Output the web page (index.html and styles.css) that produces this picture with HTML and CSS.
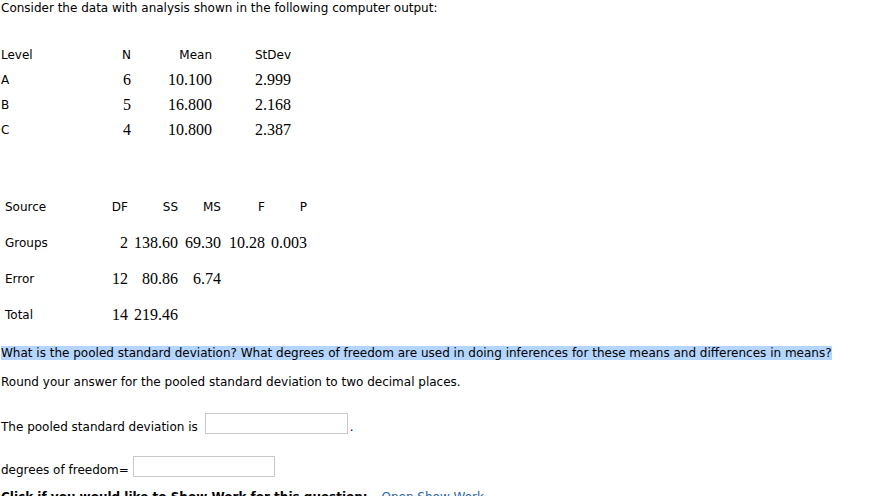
FILE: index.html
```html
<!DOCTYPE html>
<html>
<head>
<meta charset="utf-8">
<link rel="stylesheet" href="styles.css">
</head>
<body>
<div class="page">
  <p class="intro">Consider the data with analysis shown in the following computer output:</p>

  <div class="levels">
    <div class="lbl">Level</div><div class="hd">N</div><div class="hd">Mean</div><div class="hd">StDev</div>
    <div class="lbl">A</div><div class="num">6</div><div class="num">10.100</div><div class="num">2.999</div>
    <div class="lbl">B</div><div class="num">5</div><div class="num">16.800</div><div class="num">2.168</div>
    <div class="lbl">C</div><div class="num">4</div><div class="num">10.800</div><div class="num">2.387</div>
  </div>

  <div class="anova">
    <div class="src">Source</div><div class="hd">DF</div><div class="hd">SS</div><div class="hd">MS</div><div class="hd">F</div><div class="hd">P</div>
    <div class="src">Groups</div><div class="num">2</div><div class="num">138.60</div><div class="num">69.30</div><div class="num">10.28</div><div class="num">0.003</div>
    <div class="src">Error</div><div class="num">12</div><div class="num">80.86</div><div class="num">6.74</div><div class="num"></div><div class="num"></div>
    <div class="src">Total</div><div class="num">14</div><div class="num">219.46</div><div class="num"></div><div class="num"></div><div class="num"></div>
  </div>

  <p class="question"><span class="hl">What is the pooled standard deviation? What degrees of freedom are used in doing inferences for these means and differences in means?</span></p>
  <p class="round">Round your answer for the pooled standard deviation to two decimal places.</p>

  <p class="answer one">The pooled standard deviation is <span class="box wide"></span>.</p>
  <p class="answer two">degrees of freedom=<span class="box dof"></span></p>
  <p class="showwork"><b>Click if you would like to Show Work for this question:</b> <a class="link">Open Show Work</a></p>
</div>
</body>
</html>
```

FILE: styles.css
```css
html, body {
  margin: 0;
  padding: 0;
  background: #fff;
}
body {
  font-family: "DejaVu Sans", Verdana, sans-serif;
  font-size: 12px;
  color: #000;
}
.page {
  padding-left: 1px;
  overflow: hidden;
  height: 496px;
}
p {
  margin: 0;
}
.intro {
  line-height: 17px;
  height: 17px;
}
.levels {
  margin-top: 25px;
  display: grid;
  grid-template-columns: 100px 30px 81px 79px;
  grid-auto-rows: 25px;
  align-items: center;
}
.levels .lbl {
  text-align: left;
}
.hd {
  text-align: right;
}
.num {
  text-align: right;
  font-family: "Liberation Serif", "Times New Roman", serif;
  font-size: 16px;
}
.anova {
  margin-top: 47px;
  display: grid;
  grid-template-columns: 100px 27px 50px 43px 44px 42px;
  grid-auto-rows: 36px;
  align-items: center;
}
.src {
  padding-left: 4px;
}
.question {
  margin-top: 11px;
  line-height: 19px;
}
.hl {
  background: #b4d5fe;
}
.round {
  margin-top: 10px;
  line-height: 19px;
}
.answer {
  display: flex;
  align-items: center;
  white-space: pre;
  height: 28px;
}
.one {
  margin-top: 21px;
}
.two {
  margin-top: 15px;
}
.box {
  display: inline-block;
  box-sizing: border-box;
  height: 21px;
  width: 142px;
  border: 1px solid #c9c9c9;
  background: #fff;
  margin-bottom: 7px;
}
.wide {
  width: 143px;
  margin-left: 3px;
  margin-right: 2px;
}
.dof {
  margin-left: 4px;
}
.showwork {
  margin-top: 5px;
  line-height: 17px;
  white-space: nowrap;
}
.link {
  color: #2a63a8;
  margin-left: 10px;
}
```
